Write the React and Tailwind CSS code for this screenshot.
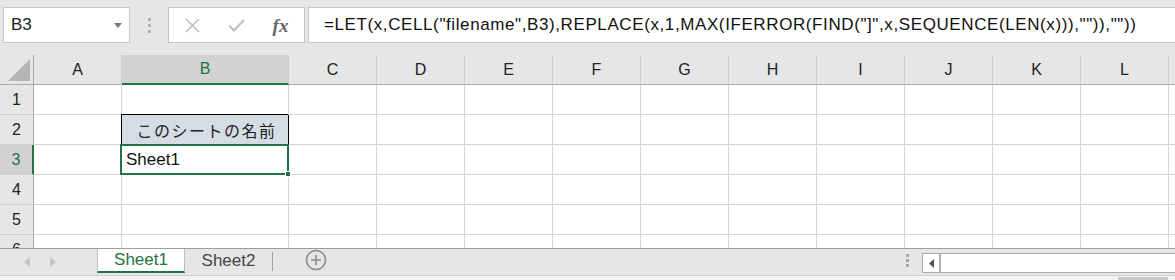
import { Fragment } from "react";

const cols = [
  { id: "A", w: "w-[88px]" },
  { id: "B", w: "w-[167px]" },
  { id: "C", w: "w-[88px]" },
  { id: "D", w: "w-[88px]" },
  { id: "E", w: "w-[88px]" },
  { id: "F", w: "w-[88px]" },
  { id: "G", w: "w-[88px]" },
  { id: "H", w: "w-[88px]" },
  { id: "I", w: "w-[88px]" },
  { id: "J", w: "w-[88px]" },
  { id: "K", w: "w-[88px]" },
  { id: "L", w: "w-[88px]" },
  { id: "", w: "w-[88px]" },
];

const rows = [1, 2, 3, 4, 5, 6];

const formula =
  '=LET(x,CELL("filename",B3),REPLACE(x,1,MAX(IFERROR(FIND("]",x,SEQUENCE(LEN(x))),"")),""))';

const Toolbar = () => (
  <div className="h-[55px] shrink-0 flex items-start pt-[7px] pl-[3px]">
    {/* name box */}
    <div className="w-[127px] h-[36px] bg-white border border-[#c6c6c6] flex items-center justify-between pl-[7px] pr-[7px]">
      <span className="text-[17px] text-[#222]">B3</span>
      <svg width="8" height="5" viewBox="0 0 8 5">
        <path d="M0 0 L8 0 L4 5 Z" fill="#7a7a7a" />
      </svg>
    </div>
    <div className="w-[38px] h-[36px] flex flex-col items-center justify-center gap-[3px]">
      <span className="w-[3px] h-[3px] bg-[#b0b0b0]" />
      <span className="w-[3px] h-[3px] bg-[#b0b0b0]" />
      <span className="w-[3px] h-[3px] bg-[#b0b0b0]" />
    </div>
    {/* cancel / enter / fx */}
    <div className="w-[137px] h-[36px] bg-white border border-[#c6c6c6] flex items-center">
      <div className="w-[44px] flex justify-center pl-[2px]">
        <svg width="15" height="15" viewBox="0 0 15 15">
          <path d="M1 1 L14 14 M14 1 L1 14" stroke="#bdbdbd" strokeWidth="1.6" />
        </svg>
      </div>
      <div className="w-[46px] flex justify-center">
        <svg width="17" height="13" viewBox="0 0 17 13">
          <path d="M1 6.5 L6 11.5 L16 1" stroke="#bdbdbd" strokeWidth="2" fill="none" />
        </svg>
      </div>
      <div className="flex-1 flex justify-center pr-[2px]">
        <span className="font-['Liberation_Serif',serif] italic text-[19px] text-[#666] leading-none font-bold">
          fx
        </span>
      </div>
    </div>
    <div className="ml-[3px] flex-1 h-[36px] bg-white border border-r-0 border-[#c6c6c6] flex items-center pl-[15px] overflow-hidden whitespace-nowrap">
      <span className="text-[17px] tracking-[0.6px] text-[#111]">{formula}</span>
    </div>
  </div>
);

const HeaderRow = () => (
  <div className="flex h-[30px] shrink-0">
    <div className="w-[34px] shrink-0 h-[30px] border-r border-b border-[#ababab] flex items-end justify-end pr-[3px] pb-[3px]">
      <svg width="22" height="22" viewBox="0 0 22 22">
        <path d="M22 0 L22 22 L0 22 Z" fill="#b4b4b4" />
      </svg>
    </div>
    {cols.map((c, i) =>
      c.id === "B" ? (
        <div
          key={i}
          className={`${c.w} shrink-0 h-[30px] bg-[#d2d2d2] border-r border-r-[#cfcfcf] border-b-2 border-b-[#217346] flex items-center justify-center text-[16px] text-[#217346]`}
        >
          {c.id}
        </div>
      ) : (
        <div
          key={i}
          className={`${c.w} shrink-0 h-[30px] border-r border-r-[#cfcfcf] border-b border-b-[#ababab] flex items-center justify-center text-[16px] text-[#222]`}
        >
          {c.id}
        </div>
      )
    )}
  </div>
);

const Cell = ({ col, row }) => {
  if (col.id === "B" && row === 2) {
    return (
      <div className={`${col.w} shrink-0 h-[30px] relative bg-[#d6dce4] border-r border-b border-black flex items-center justify-center`}>
        <span className="absolute -left-[1px] -top-[1px] right-0 bottom-0 border-l border-t border-black" />
        <span className="font-['Noto_Sans_CJK_JP',sans-serif] text-[16px] tracking-[1.5px] text-[#222] pl-[3px]">
          このシートの名前
        </span>
      </div>
    );
  }
  if (col.id === "B" && row === 3) {
    return (
      <div className={`${col.w} shrink-0 h-[30px] relative bg-white border-r border-b border-[#d4d4d4] flex items-center pl-[4px]`}>
        <span className="text-[17px] text-[#111]">Sheet1</span>
        <span className="absolute -left-[2px] -top-[1px] -right-[1px] -bottom-[1px] border-2 border-[#217346]" />
        <span className="absolute -right-[3px] -bottom-[3px] w-[6px] h-[6px] bg-[#217346] border border-white" />
      </div>
    );
  }
  return <div className={`${col.w} shrink-0 h-[30px] border-r border-b border-[#d4d4d4]`} />;
};

const Sheet = () => (
  <div className="h-[193px] shrink-0 overflow-hidden flex flex-col">
    <HeaderRow />
    {rows.map((r) => (
      <div key={r} className="flex h-[30px] shrink-0 bg-white">
        {r === 3 ? (
          <div className="w-[34px] shrink-0 h-[30px] bg-[#d2d2d2] border-r-2 border-r-[#217346] border-b border-b-[#cfcfcf] flex items-center justify-center text-[16px] text-[#217346]">
            {r}
          </div>
        ) : (
          <div className="w-[34px] shrink-0 h-[30px] bg-[#e6e6e6] border-r border-r-[#ababab] border-b border-b-[#cfcfcf] flex items-center justify-center text-[16px] text-[#222]">
            {r}
          </div>
        )}
        {cols.map((c, i) => (
          <Fragment key={i}>
            <Cell col={c} row={r} />
          </Fragment>
        ))}
      </div>
    ))}
  </div>
);

const TabBar = () => (
  <div className="flex-1 flex flex-col">
    <div className="h-[28px] border-t border-[#9e9e9e] border-b border-b-[#d0d0d0] flex items-stretch">
      <div className="w-[97px] flex items-center pl-[24px] gap-[20px]">
        <svg width="6" height="10" viewBox="0 0 6 10">
          <path d="M6 0 L6 10 L0 5 Z" fill="#c4c4c4" />
        </svg>
        <svg width="6" height="10" viewBox="0 0 6 10">
          <path d="M0 0 L0 10 L6 5 Z" fill="#c4c4c4" />
        </svg>
      </div>
      <div className="w-[88px] h-[24px] bg-white border-l border-r border-[#c0c0c0] border-b-2 border-b-[#217346] flex items-center justify-center text-[17px] text-[#217346]">
        Sheet1
      </div>
      <div className="w-[87px] h-[24px] flex items-center justify-center text-[17px] text-[#444]">
        Sheet2
      </div>
      <div className="w-px h-[19px] mt-[3px] bg-[#a0a0a0]" />
      <div className="w-[86px] flex items-center justify-center pb-[4px]">
        <svg width="22" height="22" viewBox="0 0 22 22">
          <circle cx="11" cy="11" r="9.5" stroke="#8a8a8a" strokeWidth="1.5" fill="none" />
          <path d="M11 6 L11 16 M6 11 L16 11" stroke="#8a8a8a" strokeWidth="1.6" />
        </svg>
      </div>
      <div className="flex-1" />
      <div className="w-[30px] flex flex-col items-center justify-center gap-[2px] pb-[4px]">
        <span className="w-[3px] h-[3px] bg-[#a8a8a8]" />
        <span className="w-[3px] h-[3px] bg-[#a8a8a8]" />
        <span className="w-[3px] h-[3px] bg-[#a8a8a8]" />
      </div>
      <div className="w-[253px] h-[20px] mt-[4px] bg-white border border-r-0 border-[#ababab] flex">
        <div className="w-[18px] flex items-center justify-center border-r-2 border-[#b0b0b0]">
          <svg width="5" height="9" viewBox="0 0 5 9">
            <path d="M5 0 L5 9 L0 4.5 Z" fill="#555" />
          </svg>
        </div>
      </div>
    </div>
    <div className="flex-1 bg-[#f3f3f3] flex justify-end pr-[7px] pt-[1px]">
      <div className="w-[50px] bg-[#c8c8c8]" />
    </div>
  </div>
);

export default function App() {
  return (
    <div className="w-[1175px] h-[280px] overflow-hidden bg-[#e6e6e6] flex flex-col font-['Liberation_Sans','Noto_Sans_CJK_JP',sans-serif]">
      <Toolbar />
      <Sheet />
      <TabBar />
    </div>
  );
}
